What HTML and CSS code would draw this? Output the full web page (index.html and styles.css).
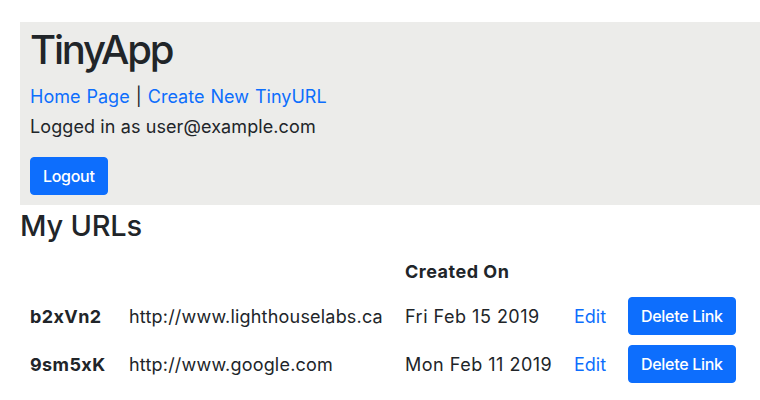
FILE: index.html
```html
<!DOCTYPE html>
<html lang="en">
<head>
<meta charset="utf-8">
<title>TinyApp</title>
<link rel="stylesheet" href="styles.css">
</head>
<body>
<header class="masthead">
  <h1 class="brand">TinyApp</h1>
  <nav class="nav"><a href="#">Home Page</a> | <a href="#">Create New TinyURL</a></nav>
  <p class="user">Logged in as user@example.com</p>
  <button class="btn" type="button">Logout</button>
</header>
<main class="content">
  <h2 class="title">My URLs</h2>
  <table class="urls">
    <thead>
      <tr>
        <th class="c-short"></th>
        <th class="c-long"></th>
        <th class="c-date">Created On</th>
        <th class="c-edit"></th>
        <th class="c-del"></th>
      </tr>
    </thead>
    <tbody>
      <tr>
        <td class="c-short key">b2xVn2</td>
        <td class="c-long">http://www.lighthouselabs.ca</td>
        <td class="c-date">Fri Feb 15 2019</td>
        <td class="c-edit"><a href="#">Edit</a></td>
        <td class="c-del"><button class="btn" type="button">Delete Link</button></td>
      </tr>
      <tr>
        <td class="c-short key">9sm5xK</td>
        <td class="c-long">http://www.google.com</td>
        <td class="c-date">Mon Feb 11 2019</td>
        <td class="c-edit"><a href="#">Edit</a></td>
        <td class="c-del"><button class="btn" type="button">Delete Link</button></td>
      </tr>
    </tbody>
  </table>
</main>
</body>
</html>
```

FILE: styles.css
```css
html, body {
  margin: 0;
  padding: 0;
  background: #ffffff;
}

body {
  padding: 22px 0 0 20px;
  font-family: Inter, "Noto Sans", sans-serif;
  color: #212529;
  font-size: 18px;
}

a {
  color: #0d6efd;
  text-decoration: none;
}

.masthead {
  background: #ececea;
  padding: 4px 10px 10px 10px;
}

.brand {
  margin: 0 0 9px 0;
  font-size: 40px;
  line-height: 48px;
  font-weight: 500;
  letter-spacing: -2.2px;
}

.nav {
  font-size: 18px;
  line-height: 27px;
  margin: 0 0 3px 0;
  word-spacing: 1px;
}

.user {
  margin: 0 0 17px 0;
  font-size: 18px;
  line-height: 27px;
  letter-spacing: 0.1px;
}

.btn {
  display: inline-block;
  font-family: Inter, "Noto Sans", sans-serif;
  font-size: 16px;
  line-height: 24px;
  font-weight: 500;
  letter-spacing: -0.3px;
  color: #ffffff;
  background: #0d6efd;
  border: 1px solid #0d6efd;
  border-radius: 4px;
  padding: 6px 12px;
  cursor: pointer;
}

.content {
  padding: 0;
}

.title {
  margin: 3px 0 6px 0;
  font-size: 29px;
  line-height: 36px;
  font-weight: 500;
  letter-spacing: -0.2px;
}

.urls {
  border-collapse: collapse;
  table-layout: fixed;
  width: 725px;
  font-size: 18px;
  line-height: 27px;
}

.urls th,
.urls td {
  padding: 0 10px;
  text-align: left;
  vertical-align: middle;
  white-space: nowrap;
}

.urls thead tr { height: 42px; }
.urls tbody tr { height: 48px; }

.urls th {
  font-weight: 700;
  letter-spacing: 0.5px;
}

.key {
  font-weight: 700;
  letter-spacing: 0.4px;
}

.c-long { letter-spacing: 0.2px; }
.c-date { letter-spacing: 0.5px; }

.c-short { width: 79px; }
.c-long { width: 256px; }
.c-date { width: 149px; }
.c-edit { width: 34px; }
.c-del { width: 107px; }
```
